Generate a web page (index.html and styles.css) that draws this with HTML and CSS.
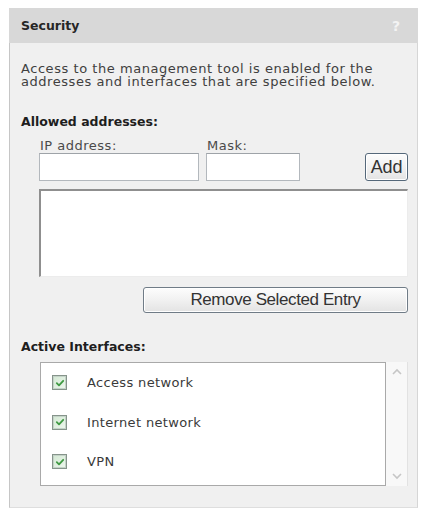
FILE: index.html
```html
<!DOCTYPE html>
<html>
<head>
<meta charset="utf-8">
<link rel="stylesheet" href="styles.css">
</head>
<body>
<div class="panel">
  <div class="panel-header">
    <span class="title">Security</span>
    <span class="help">?</span>
  </div>
  <div class="panel-body">
    <p class="intro">Access to the management tool is enabled for the addresses and interfaces that are specified below.</p>
    <h2 class="section-title">Allowed addresses:</h2>
    <div class="addr-form">
      <div class="field-row">
        <label class="field ip">
          <span class="field-label">IP address:</span>
          <input class="text-input" type="text">
        </label>
        <label class="field mask">
          <span class="field-label">Mask:</span>
          <input class="text-input" type="text">
        </label>
        <button class="btn btn-add" type="button">Add</button>
      </div>
      <div class="listbox"></div>
      <div class="remove-row">
        <button class="btn btn-remove" type="button">Remove Selected Entry</button>
      </div>
    </div>
    <h2 class="section-title active-title">Active Interfaces:</h2>
    <div class="iface-wrap">
      <div class="iface-list">
        <div class="iface-row">
          <span class="check"><svg viewBox="0 0 12 12" width="12" height="12"><path d="M2.8 6.2 L5 8.4 L9.2 3.8" fill="none" stroke="#3f9a43" stroke-width="1.8" stroke-linecap="round" stroke-linejoin="round"/></svg></span>
          <span class="iface-label">Access network</span>
        </div>
        <div class="iface-row">
          <span class="check"><svg viewBox="0 0 12 12" width="12" height="12"><path d="M2.8 6.2 L5 8.4 L9.2 3.8" fill="none" stroke="#3f9a43" stroke-width="1.8" stroke-linecap="round" stroke-linejoin="round"/></svg></span>
          <span class="iface-label">Internet network</span>
        </div>
        <div class="iface-row">
          <span class="check"><svg viewBox="0 0 12 12" width="12" height="12"><path d="M2.8 6.2 L5 8.4 L9.2 3.8" fill="none" stroke="#3f9a43" stroke-width="1.8" stroke-linecap="round" stroke-linejoin="round"/></svg></span>
          <span class="iface-label">VPN</span>
        </div>
      </div>
      <div class="scrollbar">
        <svg class="arrow" viewBox="0 0 12 8" width="12" height="8"><path d="M2 6 L6 2 L10 6" fill="none" stroke="#c6c6c6" stroke-width="1.6"/></svg>
        <svg class="arrow" viewBox="0 0 12 8" width="12" height="8"><path d="M2 2 L6 6 L10 2" fill="none" stroke="#c6c6c6" stroke-width="1.6"/></svg>
      </div>
    </div>
  </div>
</div>
</body>
</html>
```
FILE: styles.css
```css
html, body {
  margin: 0;
  padding: 0;
  background: #ffffff;
}
body {
  font-family: "DejaVu Sans", Verdana, sans-serif;
  color: #3c3c3c;
}
.panel {
  margin: 8px 0 0 9px;
  width: 409px;
  height: 500px;
  display: flex;
  flex-direction: column;
}
.panel-header {
  height: 35px;
  flex: none;
  background: #d8d8d8;
  display: flex;
  align-items: center;
  justify-content: space-between;
  padding: 0 18px 0 12px;
}
.title {
  font-size: 12.5px;
  font-weight: bold;
  color: #262626;
}
.help {
  font-size: 14px;
  font-weight: bold;
  color: #f3f3f3;
}
.panel-body {
  flex: 1;
  background: #f0f0f0;
  border-left: 1px solid #c6c6c6;
  border-right: 1px solid #d6d6d6;
  border-bottom: 1px solid #dedede;
  padding: 19px 9px 0 11px;
}
.intro {
  margin: 0;
  font-size: 13px;
  line-height: 13px;
  letter-spacing: 0.55px;
  color: #404040;
}
.section-title {
  margin: 27px 0 0;
  font-size: 12.5px;
  line-height: 14px;
  font-weight: bold;
  color: #1e1e1e;
}
.addr-form {
  margin-left: 18px;
}
.field-row {
  display: flex;
  align-items: flex-end;
  margin-top: 10px;
}
.field {
  display: flex;
  flex-direction: column;
}
.field.mask {
  margin-left: 7px;
}
.field-label {
  font-size: 13px;
  line-height: 13px;
  letter-spacing: 0.5px;
  color: #4a4a4a;
  margin-bottom: 1px;
  padding-left: 1px;
}
.text-input {
  box-sizing: border-box;
  height: 28px;
  margin: 0;
  border: 1px solid #b3b8bd;
  border-top-color: #9ea3a8;
  background: #ffffff;
  padding: 0 3px;
}
.ip .text-input { width: 160px; }
.mask .text-input { width: 94px; }
.btn {
  font-family: "Liberation Sans", Arial, sans-serif;
  font-size: 17px;
  color: #333333;
  border: 1px solid #707c87;
  border-radius: 3px;
  background: linear-gradient(#fdfdfd, #f1f1f1 50%, #e3e3e3);
  box-shadow: inset 0 0 0 1px #ffffff;
  padding: 0;
  margin: 0;
  letter-spacing: -0.2px;
}
.btn-add {
  margin-left: auto;
  width: 43px;
  height: 28px;
  font-size: 18px;
  border-color: #55687a;
}
.listbox {
  box-sizing: border-box;
  margin-top: 8px;
  width: 369px;
  height: 88px;
  background: #ffffff;
  border-top: 2px solid #8f8f8f;
  border-left: 2px solid #8f8f8f;
  border-right: 1px solid #ececec;
  border-bottom: 1px solid #ececec;
}
.remove-row {
  display: flex;
  justify-content: flex-end;
  margin-top: 10px;
}
.btn-remove {
  width: 265px;
  height: 26px;
  letter-spacing: -0.4px;
}
.active-title {
  margin-top: 27px;
}
.iface-wrap {
  margin: 8px 0 0 19px;
  display: flex;
  height: 124px;
}
.iface-list {
  box-sizing: border-box;
  width: 348px;
  height: 124px;
  background: #ffffff;
  border: 1px solid #a9a9a9;
  padding-left: 11px;
}
.iface-row {
  height: 39.5px;
  display: flex;
  align-items: center;
}
.check {
  box-sizing: border-box;
  width: 15px;
  height: 15px;
  border: 1px solid #86948b;
  box-shadow: inset 0 0 0 1px #c4d3c8;
  background: linear-gradient(135deg, #d3e8d3, #eef7ee);
  display: flex;
  align-items: center;
  justify-content: center;
}
.iface-label {
  margin-left: 20px;
  font-size: 13px;
  letter-spacing: 0.35px;
  color: #3a3a3a;
}
.scrollbar {
  box-sizing: border-box;
  width: 22px;
  height: 124px;
  background: #f8f8f8;
  border-right: 1px solid #e2e2e2;
  display: flex;
  flex-direction: column;
  align-items: center;
  justify-content: space-between;
  padding: 6px 0 6px;
}
.arrow {
  display: block;
}
```
